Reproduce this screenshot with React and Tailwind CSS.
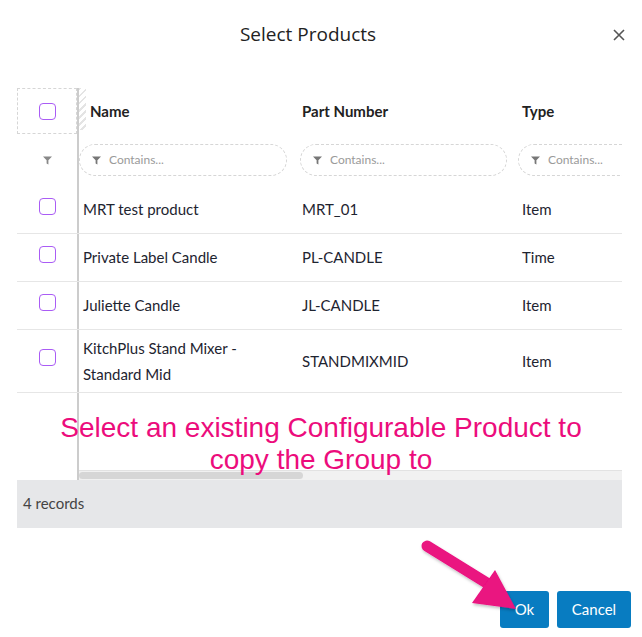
import React from "react";

const rows = [
  { name: ["MRT test product"], pn: "MRT_01", type: "Item" },
  { name: ["Private Label Candle"], pn: "PL-CANDLE", type: "Time" },
  { name: ["Juliette Candle"], pn: "JL-CANDLE", type: "Item" },
  { name: ["KitchPlus Stand Mixer -", "Standard Mid"], pn: "STANDMIXMID", type: "Item", tall: true },
];

function Funnel({ className = "" }) {
  return (
    <svg viewBox="0 0 10 9" className={className} fill="currentColor">
      <path d="M0 0h10L6 4.2V9L4 7.8V4.2z" />
    </svg>
  );
}

function Checkbox() {
  return <div className="w-[17px] h-[17px] rounded-[4px] border-[1.5px] border-[#aa5cf5] bg-white" />;
}

function FilterInput({ w }) {
  return (
    <div
      className={`${w} h-[32px] shrink-0 rounded-full border border-dashed border-[#d6d6d6] flex items-center pl-[12px] gap-[8px] text-[#9a9a9a] text-[12px]`}
    >
      <Funnel className="w-[9px] h-[9px] text-[#777]" />
      <span>Contains...</span>
    </div>
  );
}

export default function App() {
  return (
    <div
      className="relative w-[642px] h-[637px] bg-white overflow-hidden"
      style={{ fontFamily: "Lato, 'Open Sans', sans-serif" }}
    >
      {/* Header */}
      <div className="relative h-[70px] flex items-center justify-center">
        <h1 className="text-[19px] text-[#222] pr-[26px] -mt-[2px]" style={{ fontFamily: "'Open Sans', sans-serif" }}>
          Select Products
        </h1>
        <button className="absolute right-[17px] top-[29px] w-[12px] h-[12px] text-[#555]">
          <svg viewBox="0 0 12 12" className="w-[12px] h-[12px]" stroke="currentColor" strokeWidth="1.6" fill="none">
            <path d="M1 1l10 10M11 1L1 11" />
          </svg>
        </button>
      </div>

      {/* Table */}
      <div className="mx-[17px] mt-[18px] w-[605px]">
        {/* Header row */}
        <div className="flex h-[46px]">
          <div className="w-[60px] shrink-0 border border-dashed border-[#d6d6d6] flex items-center justify-center">
            <Checkbox />
          </div>
          <div className="w-[2px] shrink-0 bg-[#cccccc]" />
          <div className="flex flex-1 overflow-hidden relative">
            <div className="absolute left-0 top-0 w-[7px] h-[42px] bg-[repeating-linear-gradient(135deg,#e4e4e4_0px,#e4e4e4_2px,#ffffff_2px,#ffffff_5px)]" />
            <div className="w-[221px] shrink-0 flex items-center pl-[11px] text-[15px] font-bold text-[#222]">Name</div>
            <div className="w-[218px] shrink-0 flex items-center pl-[2px] text-[15px] font-bold text-[#222]">Part Number</div>
            <div className="flex-1 flex items-center pl-[4px] text-[15px] font-bold text-[#222]">Type</div>
          </div>
        </div>

        {/* Filter row */}
        <div className="flex h-[52px]">
          <div className="w-[60px] shrink-0 flex items-center justify-center">
            <Funnel className="w-[9px] h-[9px] text-[#888]" />
          </div>
          <div className="w-[2px] shrink-0 bg-[#cccccc]" />
          <div className="flex flex-1 overflow-hidden items-center">
            <div className="w-[221px] shrink-0"><FilterInput w="w-[208px]" /></div>
            <div className="w-[218px] shrink-0"><FilterInput w="w-[207px]" /></div>
            <div className="flex-1"><FilterInput w="w-[120px]" /></div>
          </div>
        </div>

        {/* Data rows */}
        {rows.map((r, i) => (
          <div key={i} className={`flex border-b border-[#e6e6e6] ${r.tall ? "h-[63px]" : "h-[48px]"}`}>
            <div className="w-[60px] shrink-0 flex items-center justify-center -mt-[7px]">
              <Checkbox />
            </div>
            <div className="w-[2px] shrink-0 bg-[#cccccc]" />
            <div className="flex flex-1 overflow-hidden items-center text-[15px] text-[#1e2430]">
              <div className="w-[221px] shrink-0 pl-[4px] leading-[26px] -mt-[1px]">
                {r.name.map((l, j) => (
                  <div key={j}>{l}</div>
                ))}
              </div>
              <div className="w-[218px] shrink-0 pl-[2px]">{r.pn}</div>
              <div className="flex-1 pl-[4px]">{r.type}</div>
            </div>
          </div>
        ))}

        {/* Empty area */}
        <div className="flex h-[77px]">
          <div className="w-[60px] shrink-0" />
          <div className="w-[2px] shrink-0 bg-[#cccccc]" />
          <div className="flex-1" />
        </div>

        {/* Horizontal scrollbar */}
        <div className="flex h-[10px]">
          <div className="w-[60px] shrink-0" />
          <div className="w-[2px] shrink-0 bg-[#cccccc]" />
          <div className="flex-1 bg-[#f1f1f1] border-t border-[#e2e2e2] flex items-center">
            <div className="w-[224px] h-[7px] rounded-full bg-[#d6d6d6]" />
          </div>
        </div>

        {/* Footer */}
        <div className="h-[48px] bg-[#e6e7e9] flex items-center pl-[6px] text-[15px] text-[#444] -mt-0">
          <span className="-mt-[2px]">4 records</span>
        </div>
      </div>

      {/* Buttons */}
      <div className="absolute right-[11px] top-[591px] flex gap-[8px]">
        <button className="w-[49px] h-[37px] rounded-[3px] bg-[#087cc1] text-white text-[15px]">Ok</button>
        <button className="w-[74px] h-[37px] rounded-[3px] bg-[#087cc1] text-white text-[15px]">Cancel</button>
      </div>

      {/* Annotation text */}
      <div
        className="absolute left-0 w-[642px] top-[412px] text-center text-[#ec0c7c] text-[28px] leading-[32px] pointer-events-none"
        style={{ fontFamily: "'Liberation Sans', Arial, sans-serif" }}
      >
        <div>Select an existing Configurable Product to</div>
        <div>copy the Group to</div>
      </div>

      {/* Arrow */}
      <svg className="absolute left-0 top-0 pointer-events-none" width="642" height="637" viewBox="0 0 642 637">
        <defs>
          <filter id="sh" x="-20%" y="-20%" width="140%" height="140%">
            <feDropShadow dx="1" dy="2" stdDeviation="1.5" floodColor="#000" floodOpacity="0.25" />
          </filter>
        </defs>
        <g filter="url(#sh)" fill="#ea1280">
          <line x1="427" y1="546" x2="490" y2="585" stroke="#ea1280" strokeWidth="11" strokeLinecap="round" />
          <path d="M495 570 L516 609 L472 603 Z" />
        </g>
      </svg>
    </div>
  );
}
